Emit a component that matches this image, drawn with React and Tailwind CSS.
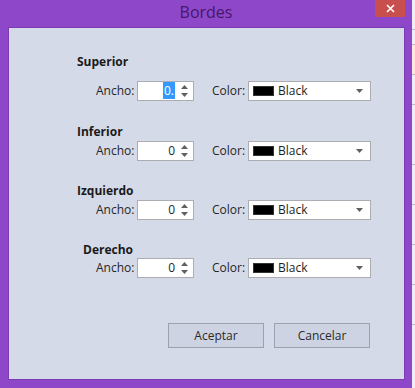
import React from "react";

const font = { fontFamily: '"Open Sans", "Noto Sans", "Liberation Sans", sans-serif' };

function Spin({ selected }) {
  return (
    <div className="w-[57px] h-[20px] bg-white border border-[#abadb3] flex items-center">
      <div className="flex-1 text-right pr-[4px] text-[12px] leading-[18px] text-[#1e1e1e]">
        {selected ? (
          <span className="bg-[#3399ff] text-white px-[1px]">0.</span>
        ) : (
          "0"
        )}
      </div>
      <div className="w-[11px] h-full flex flex-col items-center justify-center gap-[4px] mr-[3px]">
        <svg width="7" height="4" viewBox="0 0 7 4"><path d="M0 4 L3.5 0 L7 4 Z" fill="#606060" /></svg>
        <svg width="7" height="4" viewBox="0 0 7 4"><path d="M0 0 L3.5 4 L7 0 Z" fill="#606060" /></svg>
      </div>
    </div>
  );
}

function ColorBox() {
  return (
    <div className="w-[123px] h-[20px] bg-white border border-[#abadb3] flex items-center">
      <div className="ml-[4px] w-[21px] h-[10px] bg-black border border-[#333]" />
      <span className="ml-[4px] text-[12px] leading-[18px] text-[#1e1e1e]">Black</span>
      <div className="flex-1" />
      <svg className="mr-[7px]" width="7" height="4" viewBox="0 0 7 4"><path d="M0 0 L7 0 L3.5 4 Z" fill="#606060" /></svg>
    </div>
  );
}

function Row({ selected }) {
  return (
    <div className="flex items-center h-[20px]">
      <span className="ml-[87px] w-[41px] text-[12px] text-[#262626]">Ancho:</span>
      <Spin selected={selected} />
      <span className="ml-[18px] w-[36px] text-[12px] text-[#262626]">Color:</span>
      <ColorBox />
    </div>
  );
}

function Title({ children, indent = "ml-[68px]" }) {
  return (
    <div className={`${indent} h-[16px] text-[12px] leading-[16px] font-bold text-[#1a1a1a]`}>{children}</div>
  );
}

export default function App() {
  return (
    <div className="flex w-[415px] h-[388px]" style={font}>
      <div className="w-[412px] h-full bg-[#8f47c9] flex flex-col">
        <div className="relative h-[27px] flex items-center justify-center">
          <span className="text-[16px] text-[#45186a] leading-none -mt-[3px]">Bordes</span>
          <div className="absolute right-[7px] top-0 w-[30px] h-[17px] bg-[#c7504f] flex items-center justify-center">
            <svg width="9" height="9" viewBox="0 0 9 9"><path d="M1 1 L8 8 M8 1 L1 8" stroke="#fff" strokeWidth="1.6" /></svg>
          </div>
        </div>
        <div className="ml-[8px] mr-[7px] h-[353px] bg-[#d5dae8] border border-[#7b3bb2] flex flex-col pt-[26px]">
          <Title>Superior</Title>
          <div className="mt-[11px]"><Row selected /></div>
          <div className="mt-[23px]"><Title>Inferior</Title></div>
          <div className="mt-[1px]"><Row /></div>
          <div className="mt-[22px]"><Title>Izquierdo</Title></div>
          <div className="mt-[1px]"><Row /></div>
          <div className="mt-[22px]"><Title indent="ml-[74px]">Derecho</Title></div>
          <div className="mt-[0px]"><Row /></div>
          <div className="mt-[45px] flex justify-end pr-[34px] gap-[10px]">
            <div className="w-[96px] h-[25px] bg-[#cdd3e2] border border-[#9ba1ad] flex items-center justify-center text-[12px] text-[#2a2a2a]">Aceptar</div>
            <div className="w-[96px] h-[25px] bg-[#cdd3e2] border border-[#9ba1ad] flex items-center justify-center text-[12px] text-[#2a2a2a]">Cancelar</div>
          </div>
        </div>
      </div>
      <div className="w-[3px] h-full bg-[#eef0f6] flex flex-col">
        <div className="h-[30px] border-b border-[#b8bcc8]" />
        <div className="h-[15px] border-b border-[#b8bcc8]" />
        <div className="h-[30px] bg-[#fbe9dc] border-b border-[#b8bcc8]" />
        <div className="h-[30px] border-b border-[#b8bcc8]" />
        <div className="h-[60px] border-b border-[#b8bcc8]" />
        <div className="h-[40px] border-b border-[#b8bcc8]" />
        <div className="h-[40px] border-b border-[#b8bcc8]" />
        <div className="h-[40px] border-b border-[#b8bcc8]" />
        <div className="h-[40px] border-b border-[#b8bcc8]" />
      </div>
    </div>
  );
}
